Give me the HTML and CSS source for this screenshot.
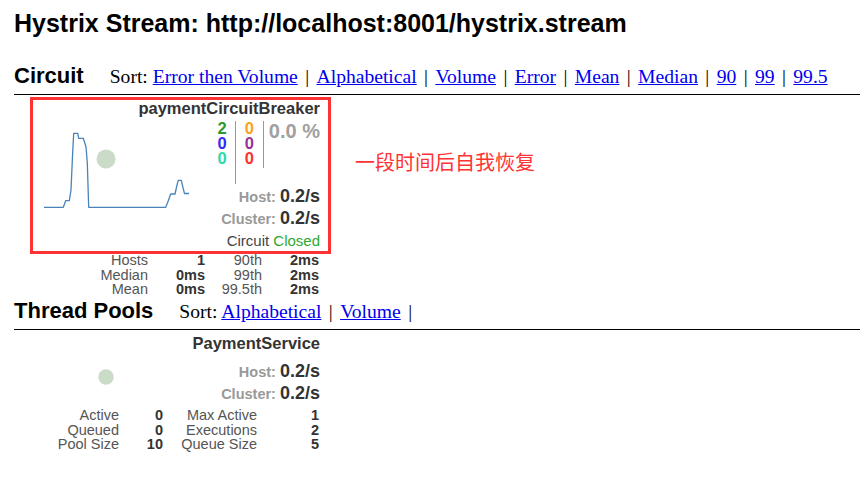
FILE: index.html
```html
<!DOCTYPE html>
<html>
<head>
<meta charset="utf-8">
<title>Hystrix Stream</title>
<link rel="stylesheet" href="styles.css">
</head>
<body>
<div class="page">
  <h1 class="title">Hystrix Stream: http://localhost:8001/hystrix.stream</h1>

  <div class="section-head circuit-head">
    <h3>Circuit</h3>
    <div class="sort">Sort: <a href="#">Error then Volume</a><span class="sep">|</span><a href="#">Alphabetical</a><span class="sep">|</span><a href="#">Volume</a><span class="sep">|</span><a href="#">Error</a><span class="sep">|</span><a href="#">Mean</a><span class="sep">|</span><a href="#">Median</a><span class="sep">|</span><a href="#">90</a><span class="sep">|</span><a href="#">99</a><span class="sep">|</span><a href="#">99.5</a></div>
  </div>

  <div class="monitor circuit">
    <svg class="chart" viewBox="14 100 306 152" width="306" height="152">
      <circle cx="106" cy="159" r="9.5" fill="#cadbc7"/>
      <path d="M44,207.3 L63.3,207.3 L65.7,200.7 L69.3,200.7 L71,190 L72.7,152 L73.7,133.3 L77.7,133.3 L78.7,138.3 L83.3,138.3 L86,146.7 L87.3,163 L88.7,207.3 L165.7,207.3 L168.3,200.7 L170.7,194 L175,194 L177,185 L178.3,180.3 L181.3,180.3 L183.3,189 L184.5,193.5 L189,193.5" fill="none" stroke="#4a83b9" stroke-width="1.3" stroke-linejoin="round"/>
    </svg>
    <p class="name">paymentCircuitBreaker</p>
    <div class="counters">
      <div class="col c1"><span class="success">2</span><span class="short">0</span><span class="bad">0</span></div>
      <div class="col c2"><span class="timeout">0</span><span class="rejected">0</span><span class="failure">0</span></div>
      <div class="err">0.0 %</div>
    </div>
    <div class="rate host"><span class="label">Host:</span> <span class="value">0.2/s</span></div>
    <div class="rate"><span class="label">Cluster:</span> <span class="value">0.2/s</span></div>
    <div class="status">Circuit <span class="closed">Closed</span></div>
    <div class="stats cstats">
      <span class="l">Hosts</span><span class="v">1</span><span class="l">90th</span><span class="v">2ms</span>
      <span class="l">Median</span><span class="v">0ms</span><span class="l">99th</span><span class="v">2ms</span>
      <span class="l">Mean</span><span class="v">0ms</span><span class="l">99.5th</span><span class="v">2ms</span>
    </div>
  </div>

  <div class="section-head pool-head">
    <h3>Thread Pools</h3>
    <div class="sort">Sort: <a href="#">Alphabetical</a><span class="sep">|</span><a href="#">Volume</a><span class="sep">|</span></div>
  </div>

  <div class="monitor pool">
    <svg class="chart" viewBox="14 335 306 70" width="306" height="70">
      <circle cx="106" cy="377" r="7.7" fill="#cadbc7"/>
    </svg>
    <p class="name">PaymentService</p>
    <div class="rate host"><span class="label">Host:</span> <span class="value">0.2/s</span></div>
    <div class="rate"><span class="label">Cluster:</span> <span class="value">0.2/s</span></div>
    <div class="stats tstats">
      <span class="l">Active</span><span class="v">0</span><span class="l">Max Active</span><span class="v">1</span>
      <span class="l">Queued</span><span class="v">0</span><span class="l">Executions</span><span class="v">2</span>
      <span class="l">Pool Size</span><span class="v">10</span><span class="l">Queue Size</span><span class="v">5</span>
    </div>
  </div>
</div>

<div class="annot-box"></div>
<div class="annot-text">一段时间后自我恢复</div>
</body>
</html>
```

FILE: styles.css
```css
* { box-sizing: border-box; }

html, body {
  margin: 0;
  padding: 0;
  background: #fff;
}

body {
  position: relative;
  width: 860px;
  height: 482px;
  overflow: hidden;
  font-family: "Liberation Sans", Arial, sans-serif;
  color: #333;
}

.page {
  padding-left: 14px;
}

.title {
  margin: 9px 0 0;
  font-size: 25px;
  line-height: 29px;
  font-weight: bold;
  color: #000;
  white-space: nowrap;
}

.section-head {
  display: flex;
  align-items: baseline;
  line-height: 26px;
  padding-bottom: 4px;
  border-bottom: 1px solid #000;
  white-space: nowrap;
}

.circuit-head { margin-top: 25px; }
.pool-head { margin-top: 1.5px; }

.section-head h3 {
  margin: 0;
  font-size: 22px;
  font-weight: bold;
  color: #000;
}

.sort {
  margin-left: 26px;
  font-family: "Liberation Serif", "Times New Roman", serif;
  font-size: 19.6px;
  color: #000;
}

.sort a {
  color: #0000ee;
  text-decoration: underline;
}

.sep { margin: 0 7.4px; color: #000; }

.monitor {
  position: relative;
  width: 306px;
  text-align: right;
}

.circuit { margin-top: 5px; }
.pool { margin-top: 5px; }

.chart {
  position: absolute;
  left: 0;
  top: 0;
}

.name {
  position: relative;
  margin: 0;
  font-size: 16.5px;
  line-height: 16px;
  font-weight: bold;
  color: #333;
}

.counters {
  position: relative;
  display: flex;
  justify-content: flex-end;
  align-items: flex-start;
  margin-top: 5px;
  font-size: 16.5px;
  line-height: 15px;
  font-weight: bold;
}

.col {
  display: flex;
  flex-direction: column;
  align-items: flex-end;
}

.c1 {
  height: 63px;
  padding-right: 8px;
  border-right: 1px solid #999;
}

.c2 {
  height: 47px;
  padding: 0 9px;
  border-right: 1px solid #999;
}

.err {
  padding-left: 5px;
  font-size: 20px;
  line-height: 20px;
  color: #a0a0a0;
}

.success { color: #2b9a2b; }
.short { color: #2f2ff5; }
.bad { color: #2fd9a8; }
.timeout { color: #ffa020; }
.rejected { color: #993399; }
.failure { color: #ff3030; }

.rate {
  position: relative;
  line-height: 21px;
  font-size: 14.5px;
  font-weight: bold;
  color: #999;
}

.rate .value {
  font-size: 18px;
  color: #333;
}

.circuit .host { margin-top: 2px; }
.pool .host { margin-top: 10px; }

.status {
  margin-top: 2px;
  font-size: 15px;
  line-height: 18px;
  color: #444;
}

.closed { color: #2fa82f; }

.stats {
  display: grid;
  font-size: 14.5px;
  line-height: 14.5px;
}

.stats .l { color: #555; }
.stats .v { color: #333; font-weight: bold; }

.cstats {
  grid-template-columns: 134px 57px 57px 57px;
  margin-top: 3px;
}

.tstats {
  grid-template-columns: 105px 44px 94px 62px;
  margin-top: 3px;
}

.annot-box {
  position: absolute;
  left: 30px;
  top: 97px;
  width: 301px;
  height: 157px;
  border: 3px solid #f33;
  pointer-events: none;
}

.annot-text {
  position: absolute;
  left: 355px;
  top: 152px;
  font-family: "Noto Sans CJK SC", "Noto Sans", sans-serif;
  font-size: 20px;
  line-height: 20px;
  color: #f33;
  white-space: nowrap;
}
```
